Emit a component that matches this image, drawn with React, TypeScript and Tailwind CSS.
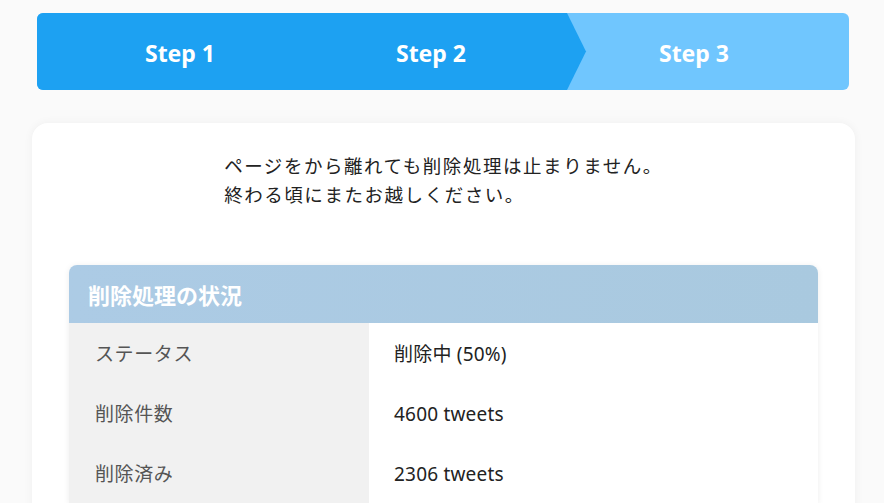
import React from 'react';

const font = { fontFamily: '"Noto Sans", "Noto Sans CJK JP", sans-serif' };

const Stepper: React.FC = () => (
    <div className="ml-[37px] w-[812px] h-[77px] flex rounded-md overflow-hidden bg-[#70c6fe] text-white font-bold text-[23px]">
        <div className="w-[286px] bg-[#1da1f2] flex items-center justify-center pt-[3px]">Step 1</div>
        <div className="w-[216px] bg-[#1da1f2] flex items-center justify-center pt-[3px]">Step 2</div>
        <div className="relative flex-1 flex items-center justify-center pt-[3px]">
            <svg className="absolute left-0 top-0 h-full" width="48" height="77" viewBox="0 0 48 77">
                <polygon points="0,0 28,0 47,38.5 28,77 0,77" fill="#1da1f2" />
            </svg>
            <span className="relative">Step 3</span>
        </div>
    </div>
);

const rows = [
    { label: 'ステータス', value: '削除中 (50%)' },
    { label: '削除件数', value: '4600 tweets' },
    { label: '削除済み', value: '2306 tweets' },
];

const StatusTable: React.FC = () => (
    <div className="mx-[37px] rounded-t-lg overflow-hidden shadow-[0_1px_6px_rgba(0,0,0,0.08)]">
        <div className="h-[58px] flex items-center pl-[19px] pt-[2px] bg-gradient-to-r from-[#accbe5] to-[#a9c9df] text-white font-bold text-[22px]">
            削除処理の状況
        </div>
        {rows.map((r) => (
            <div key={r.label} className="flex h-[60px] text-[19px]">
                <div className="w-[300px] bg-[#f1f1f1] flex items-center pl-[26px] pt-[3px] tracking-[0.6px] text-[#555555]">{r.label}</div>
                <div className="flex-1 bg-white flex items-center pl-[25px] pt-[3px] tracking-[0.2px] text-[#222222]">{r.value}</div>
            </div>
        ))}
    </div>
);

const App: React.FC = () => {
    return (
        <div className="min-h-screen bg-[#fafafa] pt-[13px] overflow-hidden" style={font}>
            <Stepper />
            <div className="ml-[32px] w-[823px] mt-[33px] bg-white rounded-2xl shadow-[0_0_10px_rgba(0,0,0,0.05)] pt-[28px] pb-10">
                <p className="mx-auto w-fit text-[18.5px] leading-[29px] tracking-[1.55px] text-[#222222]">
                    ページをから離れても削除処理は止まりません。<br />
                    終わる頃にまたお越しください。
                </p>
                <div className="h-[56px]" />
                <StatusTable />
            </div>
        </div>
    );
};

export default App;
